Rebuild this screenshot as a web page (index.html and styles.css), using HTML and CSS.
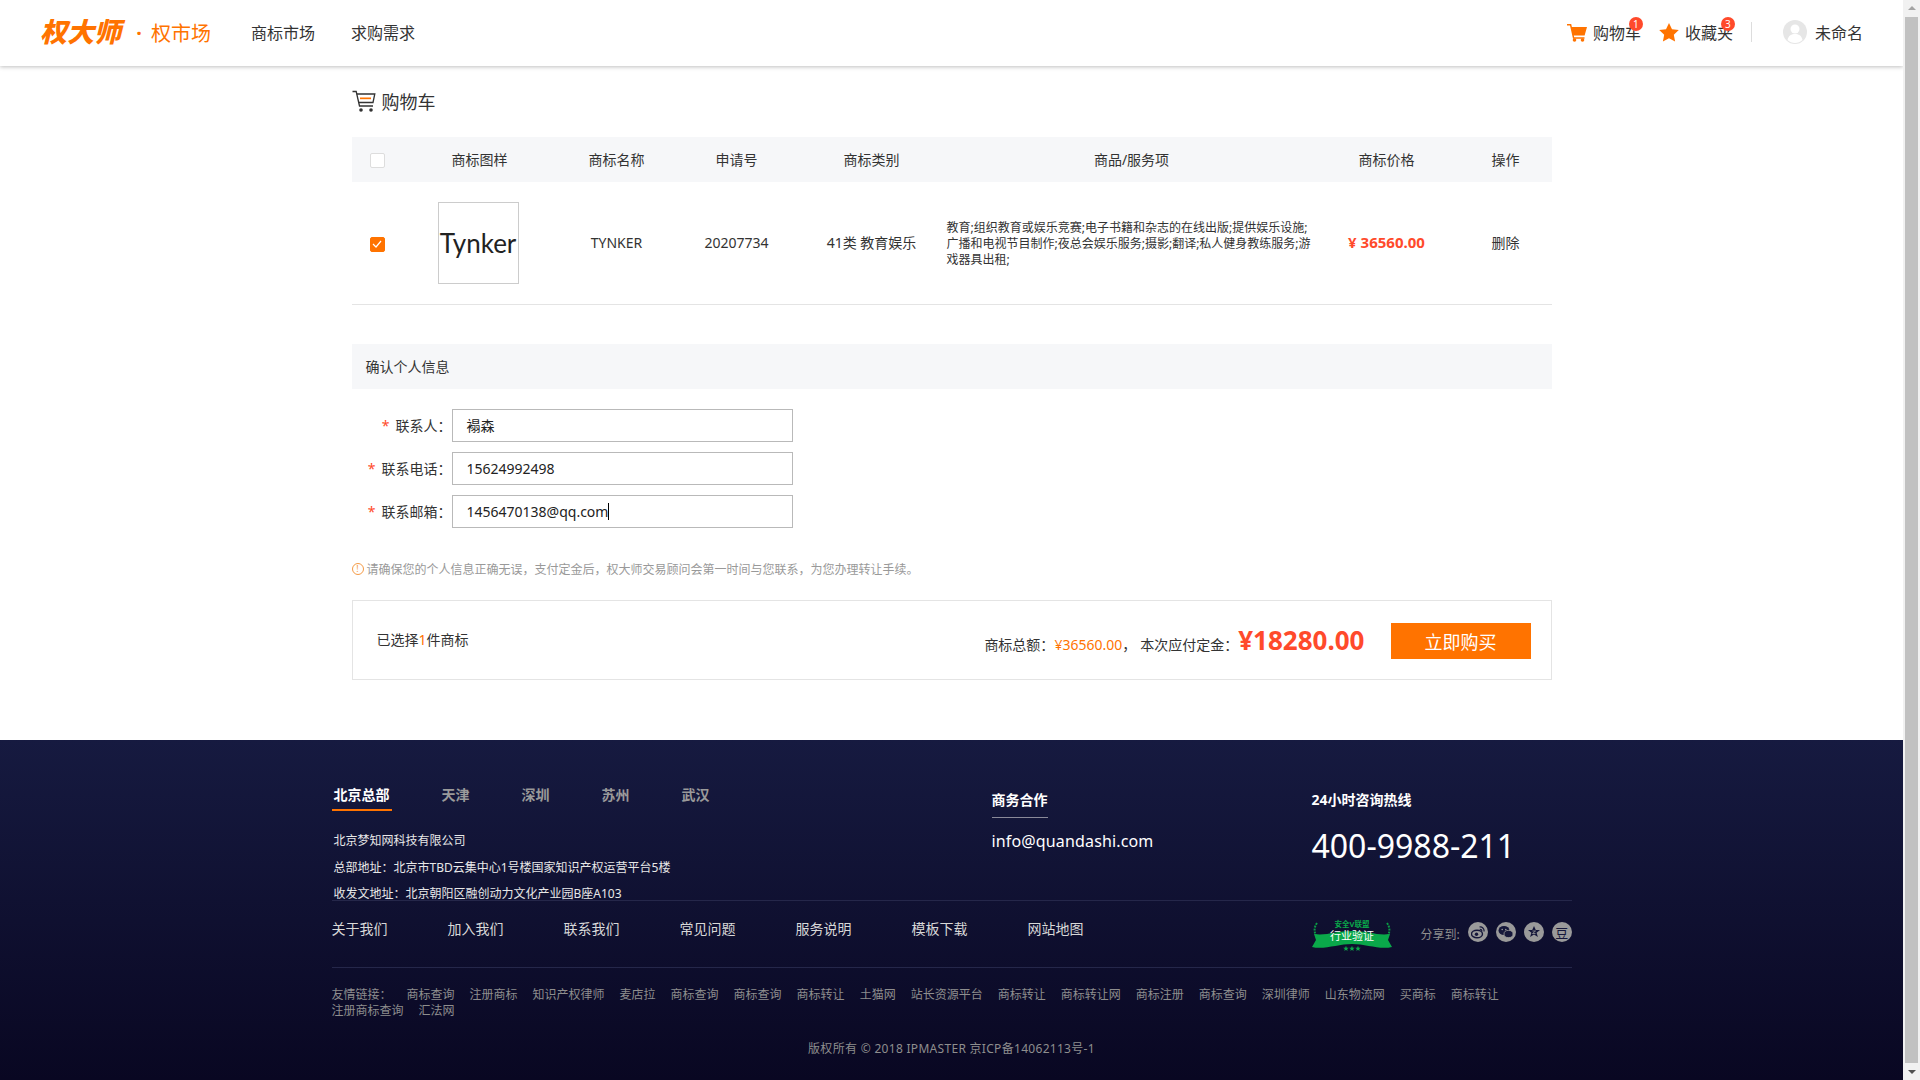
FILE: index.html
```html
<!DOCTYPE html>
<html>
<head>
  <meta charset="utf-8">
  <title>购物车 - 权大师</title>
  <link rel="stylesheet" href="styles.css">
</head>
<body>
<div id="page">
  <div id="header">
    <div class="logo"><span class="logoMark">权大师</span><span class="logoDot">·</span><span class="logoName">权市场</span></div>
    <div class="nav"><a>商标市场</a><a>求购需求</a></div>
    <div class="tools">
      <a class="tool">
        <svg width="20" height="19" viewBox="0 0 20 19"><path d="M0 1h4.2l.7 3H20l-2.4 8.600H6.800l.4 1.600h10.300v1.500H6L3 2.500H0z" fill="#ff7300"/><circle cx="7.500" cy="17" r="1.800" fill="#ff7300"/><circle cx="15.500" cy="17" r="1.800" fill="#ff7300"/></svg>
        购物车<span class="badge">1</span>
      </a>
      <a class="tool">
        <svg width="20" height="19" viewBox="0 0 20 19"><path d="M10 0l3 6.200 6.800.9-5 4.700 1.300 6.800-6.100-3.300-6.100 3.300 1.300-6.800-5-4.700L7 6.200z" fill="#ff7300"/></svg>
        收藏夹<span class="badge">3</span>
      </a>
      <span class="toolDivider"></span>
      <a class="user">
        <svg width="24" height="24" viewBox="0 0 24 24"><circle cx="12" cy="12" r="12" fill="#e6e6e6"/><circle cx="12" cy="9" r="4.500" fill="#fff"/><path d="M4.500 20c1-4.500 4-6 7.500-6s6.500 1.500 7.500 6c-2 2-4.700 3-7.500 3s-5.500-1-7.500-3z" fill="#fff"/></svg>
        未命名
      </a>
    </div>
  </div>

  <div id="main">
    <div class="pageTitle">
      <svg width="24" height="23" viewBox="0 0 24 23"><path d="M0.500 1.500h3.700l3.300 14.500h13.500" fill="none" stroke="#333" stroke-width="1.300"/><path d="M4.800 4h18l-1.800 8.500H6.800" fill="none" stroke="#333" stroke-width="1.300"/><rect x="8" y="7.500" width="11" height="1.700" fill="#ff7300"/><circle cx="9" cy="20" r="1.800" fill="#333"/><circle cx="19" cy="20" r="1.800" fill="#333"/></svg>
      购物车
    </div>

    <div class="cartRow cartHead">
      <div><span class="check"></span></div>
      <div>商标图样</div>
      <div>商标名称</div>
      <div>申请号</div>
      <div>商标类别</div>
      <div>商品/服务项</div>
      <div>商标价格</div>
      <div class="opCell">操作</div>
    </div>
    <div class="cartRow cartItem">
      <div><span class="check checked"><svg width="10" height="8" viewBox="0 0 10 8"><path d="M1 4l3 3 5-6" fill="none" stroke="#fff" stroke-width="1.200"/></svg></span></div>
      <div><div class="tmImage">Tynker</div></div>
      <div>TYNKER</div>
      <div>20207734</div>
      <div>41类 教育娱乐</div>
      <div class="goods">教育;组织教育或娱乐竞赛;电子书籍和杂志的在线出版;提供娱乐设施;广播和电视节目制作;夜总会娱乐服务;摄影;翻译;私人健身教练服务;游戏器具出租;</div>
      <div class="price">¥ 36560.00</div>
      <div class="opCell">删除</div>
    </div>

    <div class="sectionBar">确认个人信息</div>
    <div class="form">
      <div class="formRow"><label><i>*</i>联系人：</label><div class="input">褟森</div></div>
      <div class="formRow"><label><i>*</i>联系电话：</label><div class="input">15624992498</div></div>
      <div class="formRow"><label><i>*</i>联系邮箱：</label><div class="input">1456470138@qq.com<span class="caret"></span></div></div>
    </div>
    <div class="notice"><span class="noticeIcon">!</span>请确保您的个人信息正确无误，支付定金后，权大师交易顾问会第一时间与您联系，为您办理转让手续。</div>

    <div class="summary">
      <div class="selected">已选择<span class="orange">1</span>件商标</div>
      <div class="totals">
        <div class="totalText">
          <span>商标总额：</span><span class="orange">¥36560.00</span><span>，</span><span class="depositLabel">本次应付定金：</span><span class="deposit">¥18280.00</span>
        </div>
        <button class="buyBtn">立即购买</button>
      </div>
    </div>
  </div>

  <div id="footer">
    <div class="footerInner">
      <div class="footerTop">
        <div>
          <div class="tabs"><a class="tab active">北京总部</a><a class="tab">天津</a><a class="tab">深圳</a><a class="tab">苏州</a><a class="tab">武汉</a></div>
          <div class="address">
            <p>北京梦知网科技有限公司</p>
            <p>总部地址：北京市TBD云集中心1号楼国家知识产权运营平台5楼</p>
            <p>收发文地址：北京朝阳区融创动力文化产业园B座A103</p>
          </div>
        </div>
        <div>
          <h4 class="footHead underlined">商务合作</h4>
          <div class="mail">info@quandashi.com</div>
        </div>
        <div>
          <h4 class="footHead">24小时咨询热线</h4>
          <div class="phone">400-9988-211</div>
        </div>
      </div>

      <div class="footerLinks">
        <div class="linkList"><a>关于我们</a><a>加入我们</a><a>联系我们</a><a>常见问题</a><a>服务说明</a><a>模板下载</a><a>网站地图</a></div>
        <div class="footerRight">
          <svg class="vBadge" width="80" height="32" viewBox="0 0 80 32">
            <path d="M5 4c-3 4-3 9-1 12M75 4c3 4 3 9 1 12" fill="none" stroke="#0b9a45" stroke-width="2" stroke-dasharray="2 1"/>
            <text x="40" y="8" text-anchor="middle" font-size="7.500" font-weight="700" fill="#0aa84a">安全V联盟</text>
            <path d="M0 28l4-7-2-6c12 2 22-3 38-3s26 5 38 3l-2 6 4 7c-12 3-26-3-40-3s-28 6-40 3z" fill="#0aa84a"/>
            <text x="40" y="21" text-anchor="middle" font-size="11" fill="#fff">行业验证</text>
            <text x="40" y="31" text-anchor="middle" font-size="6" fill="#0aa84a">★★★</text>
          </svg>
          <span class="shareLabel">分享到:</span>
          <span class="share"><svg width="14" height="14" viewBox="0 0 14 14"><ellipse cx="6" cy="9" rx="5.500" ry="3.800" fill="none" stroke="#15173a" stroke-width="1.400"/><circle cx="5.500" cy="9.300" r="1.700" fill="#15173a"/><path d="M8.500 2c2.500-.5 5 1.500 4.500 4.500M8.800 4.300c1.200-.2 2.200.8 2 2" fill="none" stroke="#15173a" stroke-width="1.200"/></svg></span>
          <span class="share"><svg width="15" height="14" viewBox="0 0 15 14"><ellipse cx="6" cy="5.500" rx="5.500" ry="4.500" fill="#15173a"/><ellipse cx="10.500" cy="9" rx="4.500" ry="3.600" fill="#15173a" stroke="#9a9a9a" stroke-width=".8"/><circle cx="4.200" cy="4.500" r=".8" fill="#9a9a9a"/><circle cx="7.800" cy="4.500" r=".8" fill="#9a9a9a"/></svg></span>
          <span class="share"><svg width="14" height="14" viewBox="0 0 14 14"><path d="M7 1l1.800 4h4.200l-3.400 2.700 1.300 4.300L7 9.500 3.100 12l1.300-4.300L1 5h4.200z" fill="#15173a"/><path d="M5.500 6h3l-3 2.500h3" fill="none" stroke="#9a9a9a" stroke-width=".8"/></svg></span>
          <span class="share doubanIcon">豆</span>
        </div>
      </div>

      <div class="friends">
        <span class="friendsLabel">友情链接：</span><a>商标查询</a><a>注册商标</a><a>知识产权律师</a><a>麦店拉</a><a>商标查询</a><a>商标查询</a><a>商标转让</a><a>土猫网</a><a>站长资源平台</a><a>商标转让</a><a>商标转让网</a><a>商标注册</a><a>商标查询</a><a>深圳律师</a><a>山东物流网</a><a>买商标</a><a>商标转让</a><a>注册商标查询</a><a>汇法网</a>
      </div>
      <div class="copyright">版权所有 © 2018 IPMASTER 京ICP备14062113号-1</div>
    </div>
  </div>
</div>

<div id="scrollbar">
  <span class="arrowUp"></span>
  <span class="thumb"></span>
  <span class="arrowDown"></span>
</div>
</body>
</html>
```

FILE: styles.css
```css
* {
  box-sizing: border-box;
}
html, body {
  margin: 0;
  padding: 0;
  height: 1080px;
  overflow: hidden;
}
body {
  display: flex;
  font-family: "Noto Sans", "Noto Sans CJK SC", sans-serif;
  font-size: 14px;
  color: #333;
  background: #fff;
}
p, h4 {
  margin: 0;
}
a {
  color: inherit;
  text-decoration: none;
}
.orange {
  color: #ff7300;
}

#page {
  width: 1903px;
  height: 1080px;
  flex: none;
}

/* header */
#header {
  height: 66px;
  padding: 0 40px 2px;
  display: flex;
  align-items: center;
  background: #fff;
  box-shadow: 0 1px 4px rgba(0,0,0,.25);
}
.logo {
  display: flex;
  align-items: center;
  width: 211px;
  color: #ff7300;
}
.logoMark {
  font-size: 27px;
  font-weight: 900;
  font-style: italic;
  line-height: 40px;
  white-space: nowrap;
}
.logoDot {
  width: 30px;
  padding-left: 6px;
  text-align: center;
  font-size: 20px;
  font-weight: 700;
}
.logoName {
  font-size: 20px;
  white-space: nowrap;
}
.nav {
  display: flex;
  gap: 36px;
  font-size: 16px;
}
.tools {
  margin-left: auto;
  display: flex;
  align-items: center;
  font-size: 16px;
}
.tool {
  position: relative;
  display: flex;
  align-items: center;
  gap: 6px;
  margin-right: 12px;
}
.badge {
  position: absolute;
  top: -3px;
  right: 4px;
  width: 14px;
  height: 14px;
  border-radius: 50%;
  background: #ff4a2b;
  color: #fff;
  font-size: 10px;
  line-height: 14px;
  text-align: center;
}
.toolDivider {
  width: 1px;
  height: 20px;
  background: #ddd;
}
.user {
  display: flex;
  align-items: center;
  gap: 8px;
  margin-left: 31px;
}

/* cart */
#main {
  width: 1200px;
  margin: 0 auto;
  padding-top: 16px;
}
.pageTitle {
  height: 40px;
  margin-bottom: 15px;
  padding-bottom: 2px;
  display: flex;
  align-items: center;
  gap: 6px;
  font-size: 18px;
}
.cartRow {
  display: grid;
  grid-template-columns: 51px 154px 120px 120px 150px 370px 140px 95px;
  align-items: center;
  text-align: center;
}
.cartHead {
  height: 45px;
  padding-bottom: 2px;
  background: #f6f7f9;
}
.cartItem {
  height: 123px;
  padding-bottom: 2px;
  border-bottom: 1px solid #e4e4e4;
}
.opCell {
  padding-left: 3px;
}
.check {
  display: inline-flex;
  align-items: center;
  justify-content: center;
  width: 15px;
  height: 15px;
  margin-top: 2px;
  border: 1px solid #ddd;
  border-radius: 2px;
  background: #fff;
  vertical-align: middle;
}
.check.checked {
  border-color: #ff7300;
  background: #ff7300;
}
.tmImage {
  width: 81px;
  height: 82px;
  margin: 2px 0 0 35px;
  border: 1px solid #ccc;
  color: #222;
  font-family: "Lato", sans-serif;
  font-size: 26px;
  line-height: 80px;
}
.goods {
  width: 365px;
  margin-top: 4px;
  text-align: left;
  font-size: 12px;
  line-height: 16px;
}
.price {
  color: #ff4a2b;
  font-size: 15px;
  font-weight: 700;
}

/* contact form */
.sectionBar {
  height: 45px;
  margin-top: 39px;
  padding-left: 14px;
  background: #f6f7f9;
  line-height: 45px;
}
.form {
  padding-top: 20px;
  display: flex;
  flex-direction: column;
  gap: 10px;
}
.formRow {
  display: flex;
  align-items: center;
}
.formRow label {
  width: 100px;
  padding-bottom: 2px;
  text-align: right;
}
.formRow i {
  margin-right: 6px;
  color: #ff4a2b;
  font-style: normal;
}
.input {
  width: 341px;
  height: 33px;
  padding-left: 14px;
  border: 1px solid #b9b9b9;
  font-size: 14px;
  line-height: 31px;
  color: #222;
  display: flex;
  align-items: center;
}
.caret {
  width: 1px;
  height: 17px;
  background: #000;
}
.notice {
  height: 20px;
  margin-top: 31px;
  display: flex;
  align-items: center;
  font-size: 12px;
  color: #999;
}
.noticeIcon {
  width: 12px;
  height: 12px;
  margin-right: 3px;
  border: 1px solid #f59a45;
  border-radius: 50%;
  color: #f59a45;
  font-size: 9px;
  line-height: 10px;
  text-align: center;
}
.summary {
  height: 80px;
  margin-top: 21px;
  padding: 0 20px 0 24px;
  display: flex;
  align-items: center;
  justify-content: space-between;
  border: 1px solid #e4e4e4;
}
.selected {
  margin-top: -2px;
}
.totals {
  display: flex;
  align-items: center;
}
.totalText {
  display: flex;
  align-items: baseline;
}
.depositLabel {
  margin-left: 4px;
}
.deposit {
  color: #ff4a2b;
  font-size: 26px;
  font-weight: 700;
  line-height: 30px;
}
.buyBtn {
  width: 140px;
  height: 36px;
  margin: 1px 0 0 26px;
  border: 0;
  background: #ff7300;
  color: #fff;
  font-family: inherit;
  font-size: 18px;
}

/* footer */
#footer {
  height: 340px;
  margin-top: 60px;
  background: linear-gradient(#161a40, #090722);
}
.footerInner {
  width: 1240px;
  margin: 0 auto;
  padding-top: 40px;
}
.footerTop {
  height: 121px;
  display: grid;
  grid-template-columns: 660px 320px 1fr;
  border-bottom: 1px solid #25274a;
}
.tabs {
  display: flex;
  height: 31px;
}
.tab {
  height: 31px;
  padding: 0 1px;
  margin-right: 50px;
  color: #9a9a9a;
  font-weight: 700;
  line-height: 30px;
}
.tab.active {
  width: 60px;
  padding-left: 2px;
  margin-right: 49px;
  border-bottom: 2px solid #ff7300;
  color: #fff;
}
.address {
  margin-top: 17px;
  padding-left: 2px;
  color: #e8e8e8;
  font-size: 12px;
  line-height: 26.500px;
}
.address p {
  white-space: nowrap;
}
.footHead {
  display: inline-block;
  height: 38px;
  color: #fff;
  font-size: 14px;
  font-weight: 700;
  line-height: 40px;
}
.footHead.underlined {
  border-bottom: 1px solid #8a8a99;
}
.mail {
  margin-top: 11px;
  color: #fff;
  font-size: 16px;
  letter-spacing: .15px;
  line-height: 24px;
}
.phone {
  margin-top: 8px;
  color: #fff;
  font-size: 32px;
  line-height: 40px;
}
.footerLinks {
  height: 67px;
  padding-top: 18px;
  display: flex;
  justify-content: space-between;
  border-bottom: 1px solid #25274a;
}
.linkList {
  display: flex;
  gap: 60px;
  color: #d8d8d8;
  line-height: 20px;
}
.footerRight {
  width: 260px;
  display: flex;
  align-items: center;
  height: 32px;
}
.vBadge {
  flex: none;
}
.shareLabel {
  flex: none;
  margin: 0 8px 2px 29px;
  color: #8e8e8e;
  font-size: 12px;
  white-space: nowrap;
}
.share {
  flex: none;
  width: 20px;
  height: 20px;
  margin-right: 8px;
  margin-bottom: 6px;
  display: flex;
  align-items: center;
  justify-content: center;
  border-radius: 50%;
  background: #9a9a9a;
}
.share:last-child {
  margin-right: 0;
}
.doubanIcon {
  color: #15173a;
  font-size: 13px;
}
.friends {
  padding-top: 19px;
  color: #8e8e8e;
  font-size: 12px;
  line-height: 16px;
}
.friends a {
  margin-right: 15px;
  display: inline-block;
}
.friendsLabel {
  margin-right: 15px;
}
.copyright {
  margin-top: 20px;
  color: #8e8e8e;
  font-size: 12px;
  line-height: 20px;
  letter-spacing: .3px;
  text-align: center;
}

/* window scrollbar */
#scrollbar {
  width: 17px;
  flex: none;
  height: 1080px;
  padding: 0 2px;
  display: flex;
  flex-direction: column;
  align-items: center;
  background: #f1f1f1;
}
.arrowUp, .arrowDown {
  flex: none;
  width: 0;
  height: 0;
  border-left: 4px solid transparent;
  border-right: 4px solid transparent;
}
.arrowUp {
  margin: 6px 0 7px;
  border-bottom: 4px solid #a3a3a3;
}
.arrowDown {
  margin: 7px 0 6px;
  border-top: 4px solid #505050;
}
.thumb {
  flex: 1;
  width: 13px;
  background: #c1c1c1;
}
```
